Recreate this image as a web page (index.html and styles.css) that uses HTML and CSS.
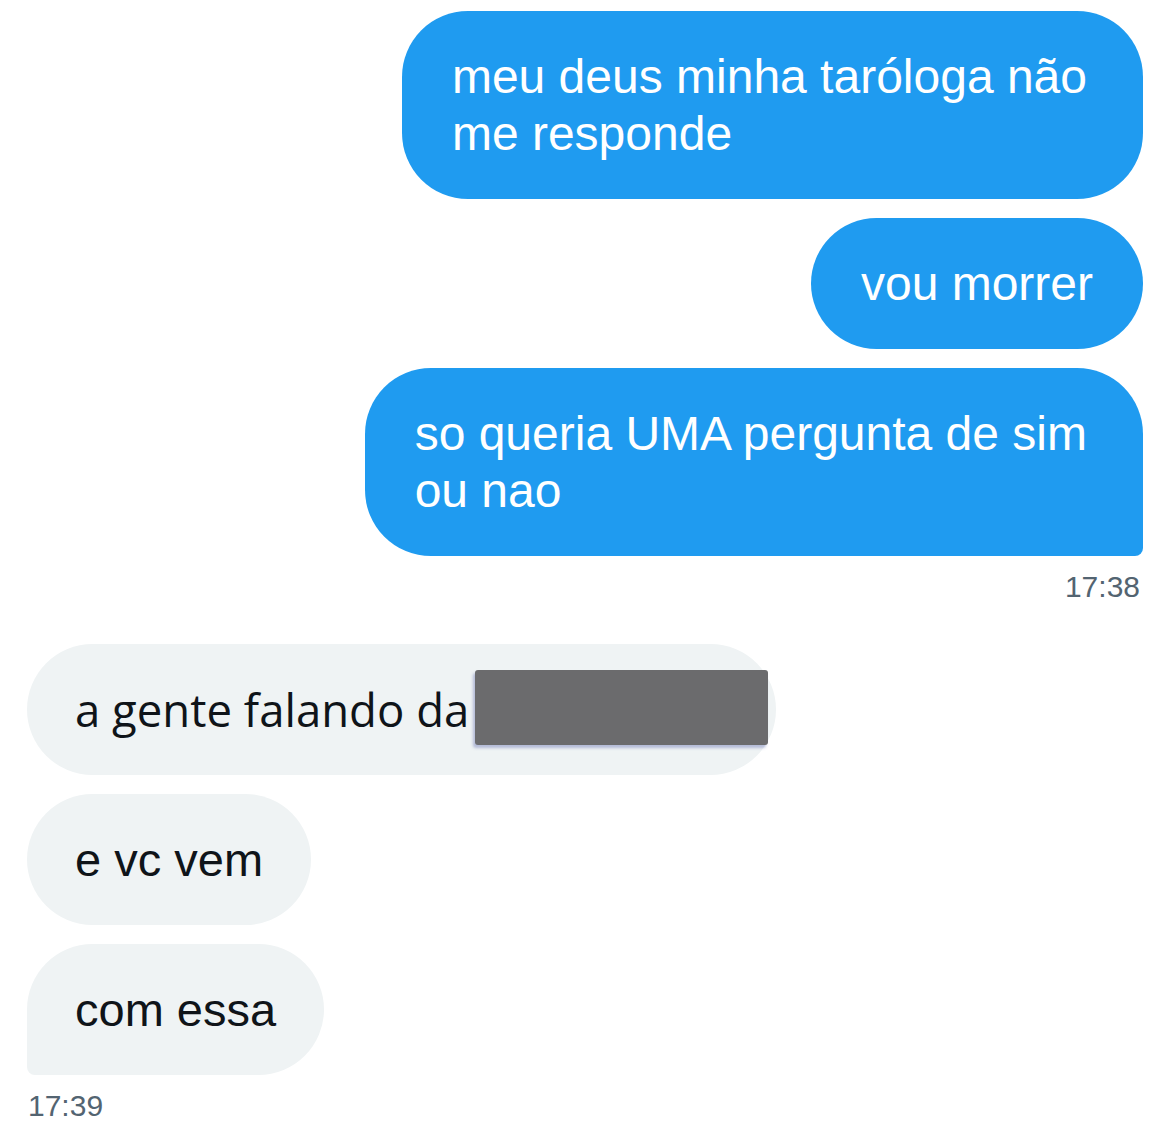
FILE: index.html
```html
<!DOCTYPE html>
<html lang="pt">
<head>
<meta charset="utf-8">
<link rel="stylesheet" href="styles.css">
</head>
<body>
<div class="chat">
  <div class="group sent">
    <div class="bubble out multi">meu deus minha taróloga não<br>me responde</div>
    <div class="bubble out">vou morrer</div>
    <div class="bubble out multi last">so queria UMA pergunta de sim<br>ou nao</div>
    <div class="time">17:38</div>
  </div>
  <div class="group received">
    <div class="bubble in redacted-bubble"><span class="open">a gente falando da</span><span class="redact"></span></div>
    <div class="bubble in">e vc vem</div>
    <div class="bubble in last">com essa</div>
    <div class="time">17:39</div>
  </div>
</div>
</body>
</html>
```
FILE: styles.css
```css
html, body {
  margin: 0;
  padding: 0;
  background: #ffffff;
}
body {
  font-family: "Liberation Sans", Arial, sans-serif;
}
.chat {
  display: flex;
  flex-direction: column;
  padding: 11px 26px 0 27px;
  gap: 40px;
}
.group {
  display: flex;
  flex-direction: column;
  gap: 19px;
}
.sent {
  align-items: flex-end;
}
.received {
  align-items: flex-start;
}
.bubble {
  font-size: 48px;
  line-height: 57px;
  padding: 37px 50px;
  border-radius: 66px;
  white-space: nowrap;
}
.multi {
  padding-right: 56px;
}
.out {
  background: #1f9bf0;
  color: #ffffff;
}
.out.last {
  border-bottom-right-radius: 8px;
}
.in {
  background: #eff3f4;
  color: #0f1419;
  font-size: 47px;
  padding-left: 48px;
  padding-right: 48px;
}
.in.last {
  border-bottom-left-radius: 8px;
}
.time {
  font-size: 30px;
  line-height: 34px;
  color: #536471;
  margin-top: -5px;
}
.sent .time {
  margin-right: 3px;
}
.received .time {
  margin-left: 1px;
}
.redacted-bubble {
  padding-right: 8px;
  display: flex;
  align-items: center;
}
.open {
  font-family: "Open Sans", sans-serif;
  font-size: 45.5px;
  line-height: 57px;
}
.redact {
  display: block;
  width: 293px;
  height: 75px;
  margin: -11px 0 -7px 6px;
  background: #6b6b6d;
  border-radius: 3px;
  box-shadow: -2px 3px 3px rgba(70, 80, 160, 0.35);
}
```
